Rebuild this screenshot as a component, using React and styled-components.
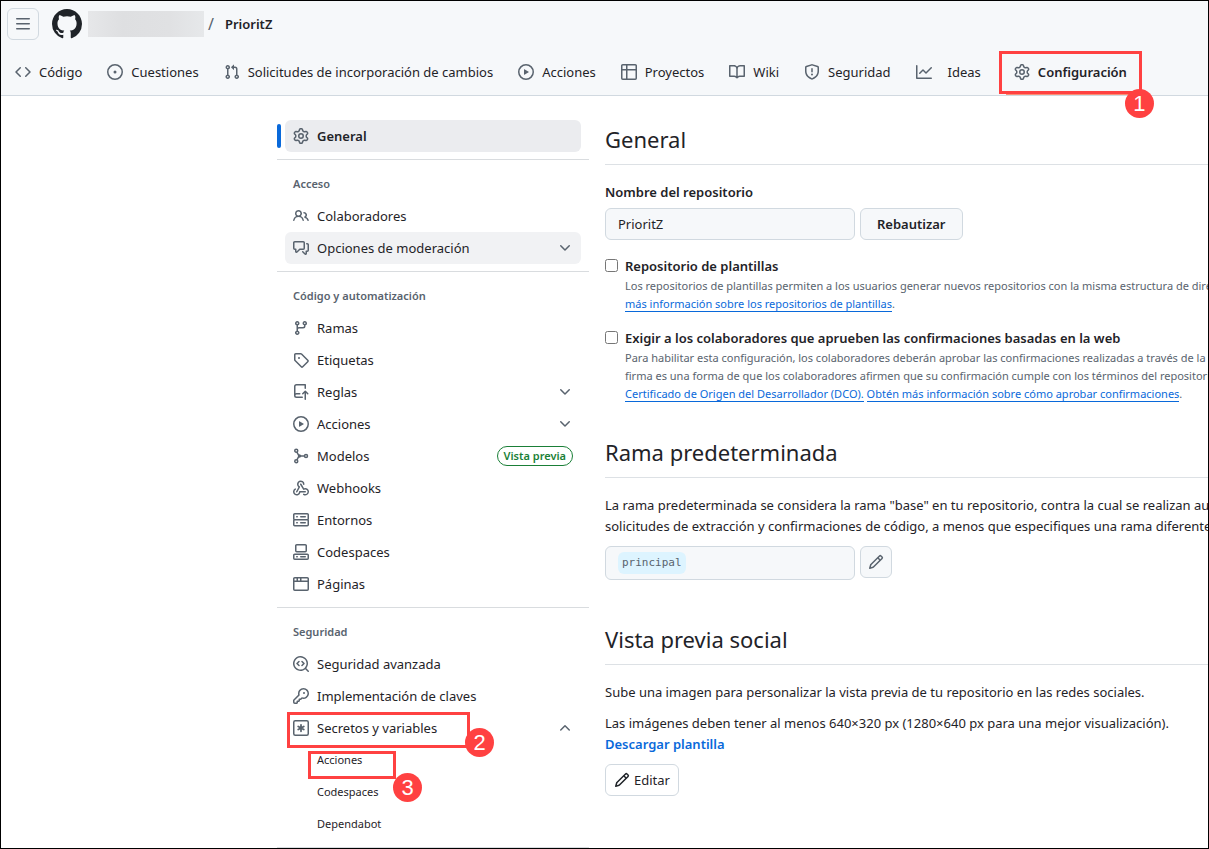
import React from "react";
import styled, { createGlobalStyle } from "styled-components";

const GlobalStyle = createGlobalStyle`
  *, *::before, *::after { box-sizing: border-box; }
  body {
    margin: 0;
    background: #fff;
    color: #1f2328;
    font-family: "Noto Sans", "Open Sans", sans-serif;
    font-size: 13px;
    line-height: 21px;
  }
  h1, h2, h3, p, ul { margin: 0; padding: 0; font-weight: 400; }
  ul { list-style: none; }
  a { color: inherit; text-decoration: none; }
  button, input { font: inherit; color: inherit; }
`;

const RING = "M8 0a8 8 0 1 1 0 16A8 8 0 0 1 8 0ZM1.5 8a6.5 6.5 0 1 0 13 0 6.5 6.5 0 0 0-13 0Z";

const ICONS = {
  bars: "M1 2.75A.75.75 0 0 1 1.75 2h12.5a.75.75 0 0 1 0 1.5H1.75A.75.75 0 0 1 1 2.75Zm0 5A.75.75 0 0 1 1.75 7h12.5a.75.75 0 0 1 0 1.5H1.75A.75.75 0 0 1 1 7.75ZM1.75 12h12.5a.75.75 0 0 1 0 1.5H1.75a.75.75 0 0 1 0-1.5Z",
  mark: "M8 0c4.42 0 8 3.58 8 8a8.013 8.013 0 0 1-5.45 7.59c-.4.08-.55-.17-.55-.38 0-.27.01-1.13.01-2.2 0-.75-.25-1.23-.54-1.48 1.78-.2 3.65-.88 3.65-3.95 0-.88-.31-1.59-.82-2.15.08-.2.36-1.02-.08-2.12 0 0-.67-.22-2.2.82-.64-.18-1.32-.27-2-.27-.68 0-1.36.09-2 .27-1.53-1.03-2.2-.82-2.2-.82-.44 1.1-.16 1.92-.08 2.12-.51.56-.82 1.28-.82 2.15 0 3.06 1.86 3.75 3.64 3.95-.23.2-.44.55-.51 1.07-.46.21-1.61.55-2.33-.66-.15-.24-.6-.83-1.23-.82-.67.01-.27.38.01.53.34.19.73.9.82 1.13.16.45.68 1.31 2.69.94 0 .67.01 1.3.01 1.49 0 .21-.15.45-.55.38A7.995 7.995 0 0 1 0 8c0-4.42 3.58-8 8-8Z",
  code: "m11.28 3.22 4.25 4.25a.75.75 0 0 1 0 1.06l-4.25 4.25a.749.749 0 0 1-1.275-.326.749.749 0 0 1 .215-.734L13.94 8l-3.72-3.72a.749.749 0 0 1 .326-1.275.749.749 0 0 1 .734.215Zm-6.56 0a.751.751 0 0 1 1.042.018.751.751 0 0 1 .018 1.042L2.06 8l3.72 3.72a.749.749 0 0 1-.326 1.275.749.749 0 0 1-.734-.215L.47 8.53a.75.75 0 0 1 0-1.06Z",
  issue: "M8 9.5a1.5 1.5 0 1 0 0-3 1.5 1.5 0 0 0 0 3Z" + RING,
  pull: "M1.5 3.25a2.25 2.25 0 1 1 3 2.122v5.256a2.251 2.251 0 1 1-1.5 0V5.372A2.25 2.25 0 0 1 1.5 3.25Zm5.677-.177L9.573.677A.25.25 0 0 1 10 .854V2.5h1A2.5 2.5 0 0 1 13.5 5v5.628a2.251 2.251 0 1 1-1.5 0V5a1 1 0 0 0-1-1h-1v1.646a.25.25 0 0 1-.427.177L7.177 3.427a.25.25 0 0 1 0-.354ZM3.75 2.5a.75.75 0 1 0 0 1.5.75.75 0 0 0 0-1.5Zm0 9.5a.75.75 0 1 0 0 1.5.75.75 0 0 0 0-1.5Zm8.25.75a.75.75 0 1 0 1.5 0 .75.75 0 0 0-1.5 0Z",
  play: RING + "m4.879-2.773 4.264 2.559a.25.25 0 0 1 0 .428l-4.264 2.559A.25.25 0 0 1 6 10.559V5.442a.25.25 0 0 1 .379-.215Z",
  table: "M0 1.75C0 .784.784 0 1.75 0h12.5C15.216 0 16 .784 16 1.75v12.5A1.75 1.75 0 0 1 14.25 16H1.75A1.75 1.75 0 0 1 0 14.25ZM6.5 6.5v8h7.75a.25.25 0 0 0 .25-.25V6.5Zm8-1.5V1.75a.25.25 0 0 0-.25-.25H6.5V5Zm-13 1.5v7.75c0 .138.112.25.25.25H5v-8ZM5 5V1.5H1.75a.25.25 0 0 0-.25.25V5Z",
  book: "M0 1.75A.75.75 0 0 1 .75 1h4.253c1.227 0 2.317.59 3 1.501A3.743 3.743 0 0 1 11.006 1h4.245a.75.75 0 0 1 .75.75v10.5a.75.75 0 0 1-.75.75h-4.507a2.25 2.25 0 0 0-1.591.659l-.622.621a.75.75 0 0 1-1.06 0l-.622-.621A2.25 2.25 0 0 0 5.258 13H.75a.75.75 0 0 1-.75-.75Zm7.251 10.324.004-5.073-.002-2.253A2.25 2.25 0 0 0 5.003 2.5H1.5v9h3.757a3.75 3.75 0 0 1 1.994.574ZM8.755 4.75l-.004 7.322a3.752 3.752 0 0 1 1.992-.572H14.5v-9h-3.495a2.25 2.25 0 0 0-2.25 2.25Z",
  shield: "M7.467.133a1.748 1.748 0 0 1 1.066 0l5.25 1.68A1.75 1.75 0 0 1 15 3.48V7c0 1.566-.32 3.182-1.303 4.682-.983 1.498-2.585 2.813-5.032 3.855a1.697 1.697 0 0 1-1.33 0c-2.447-1.042-4.049-2.357-5.032-3.855C1.32 10.182 1 8.566 1 7V3.48a1.75 1.75 0 0 1 1.217-1.667Zm.61 1.429a.25.25 0 0 0-.153 0l-5.25 1.68a.25.25 0 0 0-.174.238V7c0 1.358.275 2.666 1.057 3.86.784 1.194 2.121 2.34 4.366 3.297a.196.196 0 0 0 .154 0c2.245-.956 3.582-2.104 4.366-3.298C13.225 9.666 13.5 8.36 13.5 7V3.48a.251.251 0 0 0-.174-.237l-5.25-1.68ZM8.75 4.75v3a.75.75 0 0 1-1.5 0v-3a.75.75 0 0 1 1.5 0ZM9 10.5a1 1 0 1 1-2 0 1 1 0 0 1 2 0Z",
  graph: "M1.5 1.75V13.5h13.75a.75.75 0 0 1 0 1.5H.75a.75.75 0 0 1-.75-.75V1.75a.75.75 0 0 1 1.5 0Zm14.28 2.53-5.25 5.25a.75.75 0 0 1-1.06 0L7 7.06 4.28 9.78a.751.751 0 0 1-1.042-.018.751.751 0 0 1-.018-1.042l3.25-3.25a.75.75 0 0 1 1.06 0L10 7.94l4.72-4.72a.751.751 0 0 1 1.042.018.751.751 0 0 1 .018 1.042Z",
  gear: "M8 0a8.2 8.2 0 0 1 .701.031C9.444.095 9.99.645 10.16 1.29l.288 1.107c.018.066.079.158.212.224.231.114.454.243.668.386.123.082.233.09.299.071l1.103-.303c.644-.176 1.392.021 1.82.63.27.385.506.792.704 1.218.315.675.111 1.422-.364 1.891l-.814.806c-.049.048-.098.147-.088.294.016.257.016.515 0 .772-.01.147.038.246.088.294l.814.806c.475.469.679 1.216.364 1.891a7.977 7.977 0 0 1-.704 1.217c-.428.61-1.176.807-1.82.63l-1.102-.302c-.067-.019-.177-.011-.3.071a5.909 5.909 0 0 1-.668.386c-.133.066-.194.158-.211.224l-.29 1.106c-.168.646-.715 1.196-1.458 1.26a8.006 8.006 0 0 1-1.402 0c-.743-.064-1.289-.614-1.458-1.26l-.289-1.106c-.018-.066-.079-.158-.212-.224a5.738 5.738 0 0 1-.668-.386c-.123-.082-.233-.09-.299-.071l-1.103.303c-.644.176-1.392-.021-1.82-.63a8.12 8.12 0 0 1-.704-1.218c-.315-.675-.111-1.422.363-1.891l.815-.806c.05-.048.098-.147.088-.294a6.214 6.214 0 0 1 0-.772c.01-.147-.038-.246-.088-.294l-.815-.806C.635 6.045.431 5.298.746 4.623a7.92 7.92 0 0 1 .704-1.217c.428-.61 1.176-.807 1.82-.63l1.102.302c.067.019.177.011.3-.071.214-.143.437-.272.668-.386.133-.066.194-.158.211-.224l.29-1.106C6.009.645 6.556.095 7.299.03 7.53.01 7.764 0 8 0Zm-.571 1.525c-.036.003-.108.036-.137.146l-.289 1.105c-.147.561-.549.967-.998 1.189-.173.086-.34.183-.5.29-.417.278-.97.423-1.529.27l-1.103-.303c-.109-.03-.175.016-.195.045-.22.312-.412.644-.573.99-.014.031-.021.11.059.19l.815.806c.411.406.562.957.53 1.456a4.709 4.709 0 0 0 0 .582c.032.499-.119 1.05-.53 1.456l-.815.806c-.081.08-.073.159-.059.19.162.346.353.677.573.989.02.03.085.076.195.046l1.102-.303c.56-.153 1.113-.008 1.53.27.161.107.328.204.501.29.447.222.85.629.997 1.189l.289 1.105c.029.109.101.143.137.146a6.6 6.6 0 0 0 1.142 0c.036-.003.108-.036.137-.146l.289-1.105c.147-.561.549-.967.998-1.189.173-.086.34-.183.5-.29.417-.278.97-.423 1.529-.27l1.103.303c.109.029.175-.016.195-.045.22-.313.411-.644.573-.99.014-.031.021-.11-.059-.19l-.815-.806c-.411-.406-.562-.957-.53-1.456a4.709 4.709 0 0 0 0-.582c-.032-.499.119-1.05.53-1.456l.815-.806c.081-.08.073-.159.059-.19a6.464 6.464 0 0 0-.573-.989c-.02-.03-.085-.076-.195-.046l-1.102.303c-.56.153-1.113.008-1.53-.27a4.44 4.44 0 0 0-.501-.29c-.447-.222-.85-.629-.997-1.189l-.289-1.105c-.029-.11-.101-.143-.137-.146a6.6 6.6 0 0 0-1.142 0ZM11 8a3 3 0 1 1-6 0 3 3 0 0 1 6 0ZM9.5 8a1.5 1.5 0 1 0-3.001.001A1.5 1.5 0 0 0 9.5 8Z",
  people: "M2 5.5a3.5 3.5 0 1 1 5.898 2.549 5.508 5.508 0 0 1 3.034 4.084.75.75 0 1 1-1.482.235 4 4 0 0 0-7.9 0 .75.75 0 0 1-1.482-.236A5.507 5.507 0 0 1 3.102 8.05 3.493 3.493 0 0 1 2 5.5ZM11 4a3.001 3.001 0 0 1 2.22 5.018 5.01 5.01 0 0 1 2.56 3.012.749.749 0 0 1-.885.954.752.752 0 0 1-.549-.514 3.507 3.507 0 0 0-2.522-2.372.75.75 0 0 1-.574-.73v-.352a.75.75 0 0 1 .416-.672A1.5 1.5 0 0 0 11 5.5.75.75 0 0 1 11 4Zm-5.5-.5a2 2 0 1 0-.001 3.999A2 2 0 0 0 5.5 3.5Z",
  discussion: "M1.75 1h8.5c.966 0 1.75.784 1.75 1.75v5.5A1.75 1.75 0 0 1 10.25 10H7.061l-2.574 2.573A1.458 1.458 0 0 1 2 11.543V10h-.25A1.75 1.75 0 0 1 0 8.25v-5.5C0 1.784.784 1 1.75 1ZM1.5 2.75v5.5c0 .138.112.25.25.25h1a.75.75 0 0 1 .75.75v2.19l2.72-2.72a.749.749 0 0 1 .53-.22h3.5a.25.25 0 0 0 .25-.25v-5.5a.25.25 0 0 0-.25-.25h-8.5a.25.25 0 0 0-.25.25Zm13 2a.25.25 0 0 0-.25-.25h-.5a.75.75 0 0 1 0-1.5h.5c.966 0 1.75.784 1.75 1.75v5.5A1.75 1.75 0 0 1 14.25 12H14v1.543a1.458 1.458 0 0 1-2.487 1.03L9.22 12.28a.749.749 0 0 1 .326-1.275.749.749 0 0 1 .734.215l2.22 2.22v-2.19a.75.75 0 0 1 .75-.75h1a.25.25 0 0 0 .25-.25Z",
  down: "M12.78 5.22a.749.749 0 0 1 0 1.06l-4.25 4.25a.749.749 0 0 1-1.06 0L3.22 6.28a.749.749 0 1 1 1.06-1.06L8 8.939l3.72-3.719a.749.749 0 0 1 1.06 0Z",
  up: "M3.22 10.53a.749.749 0 0 1 0-1.06l4.25-4.25a.749.749 0 0 1 1.06 0l4.25 4.25a.749.749 0 1 1-1.06 1.06L8 6.811 4.28 10.53a.749.749 0 0 1-1.06 0Z",
  branch: "M9.5 3.25a2.25 2.25 0 1 1 3 2.122V6A2.5 2.5 0 0 1 10 8.5H6a1 1 0 0 0-1 1v1.128a2.251 2.251 0 1 1-1.5 0V5.372a2.25 2.25 0 1 1 1.5 0v1.836A2.493 2.493 0 0 1 6 7h4a1 1 0 0 0 1-1v-.628A2.25 2.25 0 0 1 9.5 3.25Zm-6 0a.75.75 0 1 0 1.5 0 .75.75 0 0 0-1.5 0Zm8.25-.75a.75.75 0 1 0 0 1.5.75.75 0 0 0 0-1.5ZM4.25 12a.75.75 0 1 0 0 1.5.75.75 0 0 0 0-1.5Z",
  tag: "M1 7.775V2.75C1 1.784 1.784 1 2.75 1h5.025c.464 0 .91.184 1.238.513l6.25 6.25a1.75 1.75 0 0 1 0 2.474l-5.026 5.026a1.75 1.75 0 0 1-2.474 0l-6.25-6.25A1.752 1.752 0 0 1 1 7.775Zm1.5 0c0 .066.026.13.073.177l6.25 6.25a.25.25 0 0 0 .354 0l5.025-5.025a.25.25 0 0 0 0-.354l-6.25-6.25a.25.25 0 0 0-.177-.073H2.75a.25.25 0 0 0-.25.25ZM6 5a1 1 0 1 1 0 2 1 1 0 0 1 0-2Z",
  push: "M1 2.5A2.5 2.5 0 0 1 3.5 0h8.75a.75.75 0 0 1 .75.75v3.5a.75.75 0 0 1-1.5 0V1.5h-8a1 1 0 0 0-1 1v6.708A2.493 2.493 0 0 1 3.5 9h3.25a.75.75 0 0 1 0 1.5H3.5a1 1 0 0 0 0 2h5.75a.75.75 0 0 1 0 1.5H3.5A2.5 2.5 0 0 1 1 11.5Zm13.23 7.79h-.001l-1.224-1.224v6.184a.75.75 0 0 1-1.5 0V9.066L10.28 10.29a.75.75 0 0 1-1.06-1.061l2.505-2.504a.75.75 0 0 1 1.06 0L15.29 9.23a.751.751 0 0 1-.018 1.042.751.751 0 0 1-1.042.018Z",
  webhook: "M5.5 4.25a2.25 2.25 0 0 1 4.5 0 .75.75 0 0 0 1.5 0 3.75 3.75 0 1 0-6.14 2.889l-2.272 4.258a.75.75 0 0 0 1.324.706L7 7.25a.75.75 0 0 0-.309-1.015A2.25 2.25 0 0 1 5.5 4.25ZM7.364 3.607a.75.75 0 0 1 1.03.257l2.608 4.349a3.75 3.75 0 1 1-.628 6.785.75.75 0 0 1 .752-1.299 2.25 2.25 0 1 0-.033-3.88.75.75 0 0 1-1.03-.256L7.107 4.636a.75.75 0 0 1 .257-1.03ZM2.9 8.776A.75.75 0 0 1 2.625 9.8 2.25 2.25 0 1 0 6 11.75a.75.75 0 0 1 .75-.751h5.5a.75.75 0 0 1 0 1.5H7.425a3.751 3.751 0 1 1-5.55-3.998.75.75 0 0 1 1.024.274Z",
  server: "M1.75 1h12.5c.966 0 1.75.784 1.75 1.75v4c0 .372-.116.717-.314 1 .198.283.314.628.314 1v4a1.75 1.75 0 0 1-1.75 1.75H1.75A1.75 1.75 0 0 1 0 12.75v-4c0-.358.109-.707.314-1a1.739 1.739 0 0 1-.314-1v-4C0 1.784.784 1 1.75 1ZM1.5 2.75v4c0 .138.112.25.25.25h12.5a.25.25 0 0 0 .25-.25v-4a.25.25 0 0 0-.25-.25H1.75a.25.25 0 0 0-.25.25Zm.25 5.75a.25.25 0 0 0-.25.25v4c0 .138.112.25.25.25h12.5a.25.25 0 0 0 .25-.25v-4a.25.25 0 0 0-.25-.25ZM7 4.75A.75.75 0 0 1 7.75 4h4.5a.75.75 0 0 1 0 1.5h-4.5A.75.75 0 0 1 7 4.75ZM7.75 10h4.5a.75.75 0 0 1 0 1.5h-4.5a.75.75 0 0 1 0-1.5ZM3 4.75A.75.75 0 0 1 3.75 4h.5a.75.75 0 0 1 0 1.5h-.5A.75.75 0 0 1 3 4.75ZM3.75 10h.5a.75.75 0 0 1 0 1.5h-.5a.75.75 0 0 1 0-1.5Z",
  codespaces: "M0 11.25c0-.966.784-1.75 1.75-1.75h12.5c.966 0 1.75.784 1.75 1.75v3A1.75 1.75 0 0 1 14.25 16H1.75A1.75 1.75 0 0 1 0 14.25Zm2-9.5C2 .784 2.784 0 3.75 0h8.5C13.216 0 14 .784 14 1.75v5a1.75 1.75 0 0 1-1.75 1.75h-8.5A1.75 1.75 0 0 1 2 6.75Zm1.75-.25a.25.25 0 0 0-.25.25v5c0 .138.112.25.25.25h8.5a.25.25 0 0 0 .25-.25v-5a.25.25 0 0 0-.25-.25Zm-2 9.5a.25.25 0 0 0-.25.25v3c0 .138.112.25.25.25h12.5a.25.25 0 0 0 .25-.25v-3a.25.25 0 0 0-.25-.25ZM7 12.75a.75.75 0 0 1 .75-.75h4.5a.75.75 0 0 1 0 1.5h-4.5a.75.75 0 0 1-.75-.75Zm-4 0a.75.75 0 0 1 .75-.75h.5a.75.75 0 0 1 0 1.5h-.5a.75.75 0 0 1-.75-.75Z",
  browser: "M0 2.75C0 1.784.784 1 1.75 1h12.5c.966 0 1.75.784 1.75 1.75v10.5A1.75 1.75 0 0 1 14.25 15H1.75A1.75 1.75 0 0 1 0 13.25ZM14.5 6h-13v7.25c0 .138.112.25.25.25h12.5a.25.25 0 0 0 .25-.25Zm-6-3.5v2h6V2.75a.25.25 0 0 0-.25-.25ZM5 2.5v2h2v-2Zm-3.25 0a.25.25 0 0 0-.25.25V4.5h2v-2Z",
  codescan: "M8.47 4.97a.75.75 0 0 0 0 1.06L9.94 7.5 8.47 8.97a.75.75 0 1 0 1.06 1.06l2-2a.75.75 0 0 0 0-1.06l-2-2a.75.75 0 0 0-1.06 0ZM6.53 6.03a.75.75 0 0 0-1.06-1.06l-2 2a.75.75 0 0 0 0 1.06l2 2a.75.75 0 1 0 1.06-1.06L5.06 7.5l1.47-1.47ZM12.246 13.307a7.501 7.501 0 1 1 1.06-1.06l2.474 2.473a.749.749 0 0 1-.326 1.275.749.749 0 0 1-.734-.215ZM1.5 7.5a6.002 6.002 0 0 0 3.608 5.504 6.002 6.002 0 0 0 6.486-1.117.748.748 0 0 1 .292-.293A6 6 0 1 0 1.5 7.5Z",
  key: "M10.5 0a5.499 5.499 0 1 1-1.288 10.848l-.932.932a.749.749 0 0 1-.53.22H7v.75a.749.749 0 0 1-.22.53l-.5.5a.749.749 0 0 1-.53.22H5v.75a.749.749 0 0 1-.22.53l-.5.5a.749.749 0 0 1-.53.22h-2A1.75 1.75 0 0 1 0 14.25v-2c0-.199.079-.389.22-.53l4.932-4.932A5.5 5.5 0 0 1 10.5 0Zm-4 5.5c-.001.431.069.86.205 1.269a.75.75 0 0 1-.181.768L1.5 12.56v1.69c0 .138.112.25.25.25h1.69l.06-.06v-1.19a.75.75 0 0 1 .75-.75h1.19l.06-.06v-1.19a.75.75 0 0 1 .75-.75h1.19l1.023-1.025a.75.75 0 0 1 .768-.18A4 4 0 1 0 6.5 5.5ZM11 6a1 1 0 1 1 0-2 1 1 0 0 1 0 2Z",
  pencil: "M11.013 1.427a1.75 1.75 0 0 1 2.474 0l1.086 1.086a1.75 1.75 0 0 1 0 2.474l-8.61 8.61c-.21.21-.47.364-.756.445l-3.251.93a.75.75 0 0 1-.927-.928l.929-3.25c.081-.286.235-.547.445-.758l8.61-8.61Zm.176 4.823L9.75 4.81l-6.286 6.287a.253.253 0 0 0-.064.108l-.558 1.953 1.953-.558a.253.253 0 0 0 .108-.064Zm1.238-3.763a.25.25 0 0 0-.354 0L10.811 3.75l1.439 1.44 1.263-1.263a.25.25 0 0 0 0-.354Z",
};

const Svg = styled.svg`
  flex: none;
  display: block;
  width: ${(p) => p.$size || 16}px;
  height: ${(p) => p.$size || 16}px;
  color: ${(p) => p.$color || "#59636e"};
`;

function Icon({ name, size, color }) {
  let body = <path fill="currentColor" d={ICONS[name]} />;
  if (name === "model") {
    body = (
      <g fill="none" stroke="currentColor" strokeWidth="1.5">
        <circle cx="3.25" cy="2.75" r="1.5" />
        <circle cx="3.25" cy="13.25" r="1.5" />
        <circle cx="13" cy="8" r="1.5" />
        <path d="M11.5 8H6M3.9 4.1 6 8l-2.1 3.9" />
        <circle cx="6.5" cy="8" r=".9" fill="currentColor" />
      </g>
    );
  }
  if (name === "asterisk") {
    body = (
      <g fill="none" stroke="currentColor" strokeWidth="1.5" strokeLinecap="round">
        <rect x=".75" y=".75" width="14.5" height="14.5" rx="1.5" />
        <path strokeWidth="1.75" d="M8 4.75v6.5M5.2 6.4l5.6 3.2M10.8 6.4 5.2 9.6" />
      </g>
    );
  }
  return (
    <Svg viewBox="0 0 16 16" aria-hidden="true" $size={size} $color={color}>
      {body}
    </Svg>
  );
}

const Page = styled.div`
  min-height: 100vh;
  border: 1px solid #000;
  overflow: hidden;
`;

const Header = styled.header`
  background: #f6f8fa;
  border-bottom: 1px solid #d1d9e0;
`;

const TopBar = styled.div`
  display: flex;
  align-items: center;
  height: 47px;
  padding: 0 0 1px 6px;
`;

const SquareButton = styled.button`
  display: flex;
  align-items: center;
  justify-content: center;
  width: 32px;
  height: 32px;
  padding: 0;
  background: #f6f8fa;
  border: 1px solid #d1d9e0;
  border-radius: 6px;
`;

const HomeLink = styled.a`
  margin: 0 6px 0 13px;
`;

const HiddenOwner = styled.span`
  width: 116px;
  height: 26px;
  background: linear-gradient(90deg, #e6e7e9, #dedfe1 30%, #e0e1e3 70%, #e6e8ea);
`;

const Slash = styled.span`
  padding: 0 11px 0 4px;
  color: #59636e;
  font-size: 16px;
`;

const RepoLink = styled.a`
  font-weight: 600;
`;

const Tabs = styled.nav`
  display: flex;
  gap: 9px;
  padding-left: 6px;
`;

const Tab = styled.a`
  position: relative;
  display: flex;
  align-items: center;
  gap: 8px;
  height: 47px;
  padding: 1px 8px 0;
  white-space: nowrap;
  font-weight: ${(p) => (p.$current ? 600 : 400)};
  box-shadow: ${(p) => (p.$current ? "inset 0 -2px #fd8c73" : "none")};
`;

const TabText = styled.span`
  padding: 0 ${(p) => (p.$spaced ? 8 : 0)}px;
`;

/* Numbered callout drawn over the control that it points at. */
const Callout = styled.span`
  position: absolute;
  z-index: 1;
  top: ${(p) => p.$top}px;
  left: ${(p) => p.$left}px;
  width: ${(p) => p.$width}px;
  height: ${(p) => p.$height}px;
  border: 3px solid #ff4141;
  pointer-events: none;
`;

const Step = styled.span`
  position: absolute;
  right: ${(p) => p.$right}px;
  bottom: ${(p) => p.$bottom}px;
  width: 29px;
  height: 29px;
  border-radius: 50%;
  background: #ff4141;
  color: #fff;
  font: 400 22px/29px "Liberation Sans", Arial, sans-serif;
  text-align: center;
`;

const Body = styled.div`
  display: flex;
  align-items: flex-start;
  gap: 16px;
  padding: 24px 0 0 276px;
`;

const Sidebar = styled.nav`
  flex: 0 0 312px;
`;

const Group = styled.section`
  padding: 8px 8px 7px;
  border-bottom: 1px solid #d9dcdf;
  &:first-child { padding-top: 0; }
`;

const GroupTitle = styled.h3`
  padding: 0 8px;
  color: #59636e;
  font-size: 11px;
  font-weight: 600;
  line-height: 32px;
`;

const Item = styled.li`
  position: relative;
`;

const ItemLink = styled.a`
  position: relative;
  display: flex;
  align-items: center;
  gap: 8px;
  height: 32px;
  padding: 0 8px;
  border-radius: 6px;
  background: ${(p) => (p.$current ? "#ebecef" : p.$hovered ? "#f1f2f4" : "transparent")};
  font-weight: ${(p) => (p.$current ? 600 : 400)};
  &::before {
    content: "";
    display: ${(p) => (p.$current ? "block" : "none")};
    position: absolute;
    top: 4px;
    left: -8px;
    width: 4px;
    height: 24px;
    border-radius: 6px;
    background: #0969da;
  }
`;

const ItemText = styled.span`
  flex: 1;
`;

const SubLink = styled.a`
  display: block;
  padding-left: 32px;
  font-size: 11px;
  line-height: 32px;
`;

const Badge = styled.span`
  padding: 0 6px;
  border: 1px solid #1a7f37;
  border-radius: 10px;
  color: #1a7f37;
  font-size: 11px;
  font-weight: 600;
  line-height: 18px;
`;

const Main = styled.main`
  flex: 1;
  min-width: 0;
  white-space: nowrap;
`;

const Section = styled.section`
  margin-bottom: ${(p) => p.$gap}px;
`;

const Heading = styled.h2`
  margin-bottom: 17px;
  padding-bottom: 6px;
  border-bottom: 1px solid #dde1e5;
  font-size: 22px;
  line-height: 38px;
`;

const FieldLabel = styled.label`
  display: block;
  margin-bottom: 5px;
  font-weight: 600;
`;

const FieldRow = styled.div`
  display: flex;
  align-items: flex-start;
  gap: 5px;
`;

const TextInput = styled.input`
  width: 250px;
  height: 32px;
  padding: 0 12px;
  background: #f6f8fa;
  border: 1px solid #d1d9e0;
  border-radius: 6px;
`;

const Button = styled.button`
  display: flex;
  align-items: center;
  gap: 4px;
  height: 32px;
  padding: 0 ${(p) => (p.$plain ? 8 : 16)}px;
  border: 1px solid #d1d9e0;
  border-radius: 6px;
  background: ${(p) => (p.$plain ? "#fff" : "#f6f8fa")};
  font-weight: ${(p) => (p.$plain ? 400 : 600)};
`;

const Options = styled.div`
  display: grid;
  gap: 15px;
  margin-top: 16px;
`;

const Option = styled.div`
  display: grid;
  grid-template-columns: 13px 1fr;
  column-gap: 7px;
`;

const CheckBox = styled.input`
  width: 13px;
  height: 13px;
  margin: 3px 0 0;
`;

const OptionLabel = styled.label`
  font-weight: 600;
`;

const Note = styled.p`
  grid-column: 2;
  color: #59636e;
  font-size: 11px;
  line-height: 18px;
`;

const InlineLink = styled.a`
  color: #0969da;
  border-bottom: 1px solid #0969da;
`;

const StrongLink = styled.a`
  color: #0969da;
  font-weight: 600;
`;

const Text = styled.p`
  margin-bottom: 10px;
  &:last-of-type { margin-bottom: 9px; }
`;

const BranchBox = styled.div`
  display: flex;
  align-items: flex-start;
  width: 250px;
  height: 34px;
  padding: 5px 12px;
  background: #f6f8fa;
  border: 1px solid #d1d9e0;
  border-radius: 6px;
`;

const BranchName = styled.code`
  padding: 0 4px;
  border-radius: 6px;
  background: #ddf4ff;
  color: #59636e;
  font: 11px/22px "DejaVu Sans Mono", monospace;
`;

const TABS = [
  ["code", "Código"],
  ["issue", "Cuestiones"],
  ["pull", "Solicitudes de incorporación de cambios"],
  ["play", "Acciones"],
  ["table", "Proyectos"],
  ["book", "Wiki"],
  ["shield", "Seguridad"],
  ["graph", "Ideas"],
];

const GROUPS = [
  { items: [{ icon: "gear", text: "General", current: true }] },
  {
    title: "Acceso",
    items: [
      { icon: "people", text: "Colaboradores" },
      { icon: "discussion", text: "Opciones de moderación", end: "down", hovered: true },
    ],
  },
  {
    title: "Código y automatización",
    items: [
      { icon: "branch", text: "Ramas" },
      { icon: "tag", text: "Etiquetas" },
      { icon: "push", text: "Reglas", end: "down" },
      { icon: "play", text: "Acciones", end: "down" },
      { icon: "model", text: "Modelos", badge: "Vista previa" },
      { icon: "webhook", text: "Webhooks" },
      { icon: "server", text: "Entornos" },
      { icon: "codespaces", text: "Codespaces" },
      { icon: "browser", text: "Páginas" },
    ],
  },
  {
    title: "Seguridad",
    items: [
      { icon: "codescan", text: "Seguridad avanzada" },
      { icon: "key", text: "Implementación de claves" },
      {
        icon: "asterisk",
        text: "Secretos y variables",
        end: "up",
        callout: { step: 2, top: 0, left: 2, width: 183, height: 36, right: -27, bottom: -12 },
        children: [
          {
            text: "Acciones",
            callout: { step: 3, top: 7, left: 23, width: 88, height: 28, right: -29, bottom: -26 },
          },
          { text: "Codespaces" },
          { text: "Dependabot" },
        ],
      },
    ],
  },
];

function Mark({ step, top, left, width, height, right, bottom }) {
  return (
    <Callout $top={top} $left={left} $width={width} $height={height}>
      <Step $right={right} $bottom={bottom}>{step}</Step>
    </Callout>
  );
}

function SidebarItem({ item }) {
  return (
    <Item>
      <ItemLink href="#" $current={item.current} $hovered={item.hovered}>
        <Icon name={item.icon} />
        <ItemText>{item.text}</ItemText>
        {item.badge && <Badge>{item.badge}</Badge>}
        {item.end && <Icon name={item.end} />}
      </ItemLink>
      {item.callout && <Mark {...item.callout} />}
      {item.children && (
        <ul>
          {item.children.map((child) => (
            <Item key={child.text}>
              <SubLink href="#">{child.text}</SubLink>
              {child.callout && <Mark {...child.callout} />}
            </Item>
          ))}
        </ul>
      )}
    </Item>
  );
}

export default function App() {
  return (
    <Page>
      <GlobalStyle />
      <Header>
        <TopBar>
          <SquareButton aria-label="Abrir menú">
            <Icon name="bars" />
          </SquareButton>
          <HomeLink href="#" aria-label="GitHub">
            <Icon name="mark" size={30} color="#1f2328" />
          </HomeLink>
          <HiddenOwner />
          <Slash>/</Slash>
          <RepoLink href="#">PrioritZ</RepoLink>
        </TopBar>
        <Tabs>
          {TABS.map(([icon, text]) => (
            <Tab key={text} href="#">
              <Icon name={icon} />
              <TabText $spaced={icon === "graph"}>{text}</TabText>
            </Tab>
          ))}
          <Tab href="#" $current>
            <Icon name="gear" />
            <TabText>Configuración</TabText>
            <Mark step={1} top={3} left={-7} width={143} height={43} right={-15} bottom={-27} />
          </Tab>
        </Tabs>
      </Header>
      <Body>
        <Sidebar>
          {GROUPS.map((group, index) => (
            <Group key={index}>
              {group.title && <GroupTitle>{group.title}</GroupTitle>}
              <ul>
                {group.items.map((item) => (
                  <SidebarItem key={item.text} item={item} />
                ))}
              </ul>
            </Group>
          ))}
        </Sidebar>
        <Main>
          <Section $gap={30}>
            <Heading>General</Heading>
            <FieldLabel htmlFor="repo-name">Nombre del repositorio</FieldLabel>
            <FieldRow>
              <TextInput id="repo-name" defaultValue="PrioritZ" />
              <Button>Rebautizar</Button>
            </FieldRow>
            <Options>
              <Option>
                <CheckBox type="checkbox" id="template" />
                <OptionLabel htmlFor="template">Repositorio de plantillas</OptionLabel>
                <Note>
                  Los repositorios de plantillas permiten a los usuarios generar nuevos repositorios con la misma estructura de directorios
                  <br />
                  <InlineLink href="#">más información sobre los repositorios de plantillas</InlineLink>.
                </Note>
              </Option>
              <Option>
                <CheckBox type="checkbox" id="signoff" />
                <OptionLabel htmlFor="signoff">
                  Exigir a los colaboradores que aprueben las confirmaciones basadas en la web
                </OptionLabel>
                <Note>
                  Para habilitar esta configuración, los colaboradores deberán aprobar las confirmaciones realizadas a través de la
                  <br />
                  firma es una forma de que los colaboradores afirmen que su confirmación cumple con los términos del repositorio
                  <br />
                  <InlineLink href="#">Certificado de Origen del Desarrollador (DCO).</InlineLink>{" "}
                  <InlineLink href="#">Obtén más información sobre cómo aprobar confirmaciones</InlineLink>.
                </Note>
              </Option>
            </Options>
          </Section>
          <Section $gap={40}>
            <Heading>Rama predeterminada</Heading>
            <Text>
              La rama predeterminada se considera la rama "base" en tu repositorio, contra la cual se realizan automáticamente
              <br />
              solicitudes de extracción y confirmaciones de código, a menos que especifiques una rama diferente.
            </Text>
            <FieldRow>
              <BranchBox>
                <BranchName>principal</BranchName>
              </BranchBox>
              <SquareButton aria-label="Cambiar nombre de la rama">
                <Icon name="pencil" />
              </SquareButton>
            </FieldRow>
          </Section>
          <Section $gap={40}>
            <Heading>Vista previa social</Heading>
            <Text>Sube una imagen para personalizar la vista previa de tu repositorio en las redes sociales.</Text>
            <Text>
              Las imágenes deben tener al menos 640×320 px (1280×640 px para una mejor visualización).
              <br />
              <StrongLink href="#">Descargar plantilla</StrongLink>
            </Text>
            <Button $plain>
              <Icon name="pencil" color="#1f2328" />
              Editar
            </Button>
          </Section>
        </Main>
      </Body>
    </Page>
  );
}
